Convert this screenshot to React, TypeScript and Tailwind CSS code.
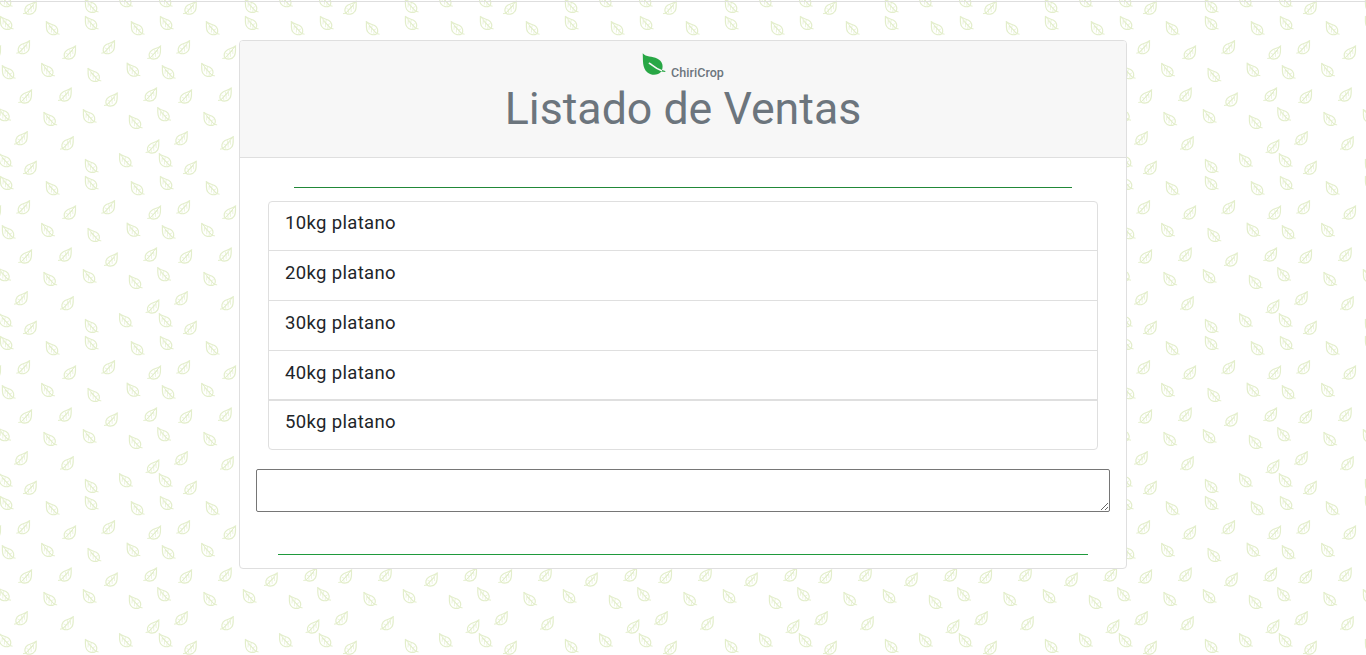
import React from "react";

const leftLeaves: [number, number][] = [
  [0, 16], [46, 21.3], [85, 16], [131, 21.3],
  [2, 65.3], [41.3, 63], [87.7, 68], [126.8, 62.8],
  [-2.6, 107.3], [43.6, 112], [83, 109.3], [129, 115],
  [-1, 153.3], [85, 159], [119.2, 153.3],
];
const rightLeaves: [number, number][] = [
  [16.3, 40], [62.3, 45.3], [101.3, 40], [147.3, 45.3],
  [18.3, 89.3], [58, 87.3], [104, 92.3], [143.3, 87.3],
  [14, 131], [60, 136], [145.6, 139.3], [23, 160.5],
];

const offsets = [[0, 0], [160, 0], [-160, 0], [0, -160], [160, -160], [-160, -160]];

function LeafBackground() {
  return (
    <svg className="absolute inset-0 -z-10 h-full w-full" aria-hidden="true">
      <defs>
        <g id="leaf" fill="none" stroke="#e3eecb" strokeLinecap="round" strokeLinejoin="round">
          <path strokeWidth="1.2" d="M.4.400C.6 4-.3 7.600 1.700 10.500C3.800 13.800 8 14.200 10.800 12.400C12.700 9.600 11.700 6.200 8.600 4.300C6 2.800 3 2.700.4.400Z" />
          <path strokeWidth="1" d="M.4.400L10.800 12.400L13.200 12.800M10.800 12.400L3.500 5" />
          <path strokeWidth="0.7" d="M3.300 4.200L3 8M5.600 6.700L5.400 10.800M8.200 9.500L7.800 12.500M5.600 6.700L6.200 4.300M7.500 8.800L9.800 7.800" />
        </g>
        <pattern id="leaves" width="160" height="160" patternUnits="userSpaceOnUse">
          {offsets.map(([dx, dy]) => (
            <g key={`${dx},${dy}`} transform={`translate(${dx} ${dy})`}>
              {leftLeaves.map(([x, y]) => (
                <use key={`l${x},${y}`} href="#leaf" x={x} y={y} />
              ))}
              {rightLeaves.map(([x, y]) => (
                <use key={`r${x},${y}`} href="#leaf" transform={`translate(${x + 13.6} ${y + 0.3}) scale(-1 1)`} />
              ))}
            </g>
          ))}
        </pattern>
      </defs>
      <rect width="100%" height="100%" fill="url(#leaves)" />
    </svg>
  );
}

const sales = [
  { name: "10kg platano", row: "h-[49px] border-b pt-2" },
  { name: "20kg platano", row: "h-[50px] border-b pt-[9px]" },
  { name: "30kg platano", row: "h-[50px] border-b pt-[9px]" },
  { name: "40kg platano", row: "h-[50px] border-b-2 pt-[9px]" },
  { name: "50kg platano", row: "h-[48px] pt-2" },
];

export default function App() {
  return (
    <div className="relative isolate h-[655px] overflow-hidden bg-white font-['Roboto',sans-serif] text-[#212529]">
      <LeafBackground />
      <div className="h-[2px] border-b border-[#dedede]" />
      <main className="mx-auto mt-[38px] h-[529px] w-[888px] rounded-[4px] border border-[#dfdfdf] bg-white">
        <header className="h-[117px] rounded-t-[3px] border-b border-[#dfdfdf] bg-[#f7f7f7] pt-3 text-center text-[#6c757d]">
          <div className="flex h-[29px] justify-center">
            <svg className="h-[23px] w-[24px]" viewBox="0 0 24 23">
              <path fill="#28a745" d="M.7.3C4 4.600 10 2.800 15.500 5.800C20 8.300 21.500 12 20 17L23.300 17.900V18.900L19.300 18.600C16 22.500 10 23 5.500 19.600C0 15 1.200 7.500.7.300Z" />
              <path fill="none" stroke="#f7f7f7" strokeWidth="1.500" strokeLinecap="round" d="M7.300 10.300C10 11.500 13 15.600 19.300 17.500" />
            </svg>
            <span className="ml-[5px] mt-3 text-[12.5px] leading-[16px] font-medium tracking-[0.05px]">ChiriCrop</span>
          </div>
          <h1 className="text-[44.7px] leading-[54px] font-normal">Listado de Ventas</h1>
        </header>
        <section className="px-4">
          <hr className="mx-[38px] mt-[29px] border-t border-[#218838]" />
          <ul className="mx-3 mt-[13px] h-[249px] rounded-[4px] border border-[#dfdfdf]">
            {sales.map(({ name, row }) => (
              <li key={name} className={`border-[#dfdfdf] px-4 text-[18.5px] leading-[27px] tracking-[0.34px] ${row}`}>
                {name}
              </li>
            ))}
          </ul>
          <textarea aria-label="Notas" className="mt-[19px] block h-[43px] w-full resize-y rounded-[2px] border border-[#767676] bg-white" />
          <hr className="mx-[22px] mt-[42px] border-t border-[#1f9a3c]" />
        </section>
      </main>
    </div>
  );
}
